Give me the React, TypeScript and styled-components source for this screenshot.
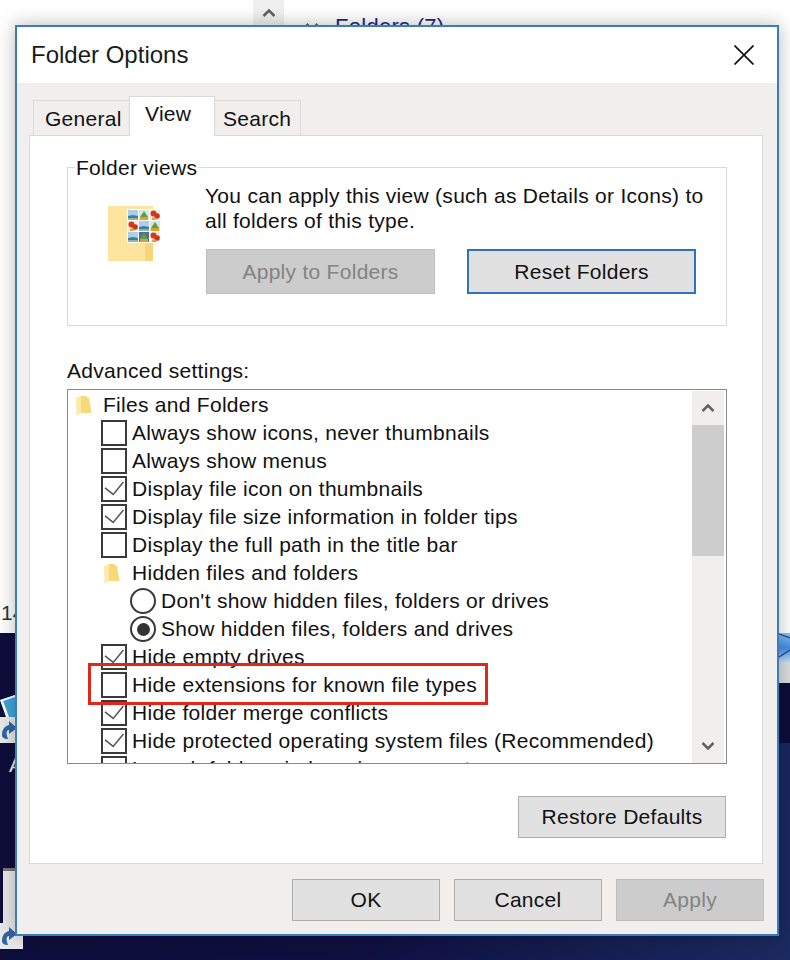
import React from 'react'
import styled, { createGlobalStyle } from 'styled-components'

const GlobalStyle = createGlobalStyle`
    html, body {
        margin: 0;
        padding: 0;
        background: #0e0d3a;
    }
    * {
        box-sizing: border-box;
    }
`

const Desktop = styled.div`
    position: relative;
    width: 790px;
    height: 960px;
    overflow: hidden;
    font-family: "Liberation Sans", Arial, sans-serif;
    font-size: 21px;
    letter-spacing: 0.28px;
    color: #111;
    background: linear-gradient(100deg, #0e0d3a 0%, #0f1040 55%, #1b2a60 100%);
`

// ** the explorer window that sits behind the dialog
const BackWindow = styled.div`
    position: relative;
    height: 633px;
    background: #fff;
`

const ScrollStub = styled.div`
    position: absolute;
    left: 253px;
    top: 0;
    width: 31px;
    height: 25px;
    display: flex;
    align-items: center;
    justify-content: center;
    background: #f0f0f0;
`

const GroupHeading = styled.div`
    position: absolute;
    left: 305px;
    top: 15px;
    display: flex;
    align-items: center;
    gap: 16px;
    font-size: 22px;
    line-height: 24px;
    color: #1c2a86;
`

const RowNumber = styled.div`
    position: absolute;
    left: 1px;
    top: 601px;
    letter-spacing: 0;
    color: #333;
`

const DesktopPiece = styled.div<{ $x: number; $y: number }>`
    position: absolute;
    left: ${p => p.$x}px;
    top: ${p => p.$y}px;
`

const IconLabel = styled(DesktopPiece)`
    color: #eee;
    line-height: 20px;
`

const StripBlock = styled.div<{ $x: number; $y: number; $w: number; $h: number; $bg: string }>`
    position: absolute;
    left: ${p => p.$x}px;
    top: ${p => p.$y}px;
    width: ${p => p.$w}px;
    height: ${p => p.$h}px;
    background: ${p => p.$bg};
`

const Window = styled.div`
    position: absolute;
    left: 15px;
    top: 25px;
    width: 764px;
    height: 911px;
    display: flex;
    flex-direction: column;
    border: 2px solid #3b7cbd;
    background: #f0efee;
    box-shadow: 0 0 18px rgba(0, 0, 0, 0.28);
`

const TitleBar = styled.div`
    height: 56px;
    flex: none;
    display: flex;
    align-items: center;
    justify-content: space-between;
    padding: 0 23px 0 14px;
    background: #fff;
`

const Title = styled.div`
    font-size: 24px;
    letter-spacing: 0;
    color: #1a1a1a;
`

const Body = styled.div`
    flex: 1;
    display: flex;
    flex-direction: column;
    padding: 13px 14px 15px 12px;
`

const TabStrip = styled.div`
    display: flex;
    align-items: flex-end;
    height: 40px;
    padding-left: 4px;
    margin-bottom: -1px;
    position: relative;
    z-index: 1;
`

const Tab = styled.div<{ $active?: boolean; $width: number; $inset: number }>`
    width: ${p => p.$width}px;
    height: ${p => (p.$active ? 40 : 36)}px;
    margin-right: -1px;
    display: flex;
    padding-left: ${p => p.$inset}px;
    padding-top: ${p => (p.$active ? 5 : 6)}px;
    line-height: 24px;
    position: relative;
    z-index: ${p => (p.$active ? 1 : 0)};
    border: 1px solid #d9d9d9;
    border-bottom: ${p => (p.$active ? 'none' : '1px solid #d9d9d9')};
    background: ${p => (p.$active ? '#fff' : '#f0efee')};
`

const Panel = styled.div`
    height: 729px;
    flex: none;
    display: flex;
    flex-direction: column;
    padding: 21px 35px 0 37px;
    background: #fff;
    border: 1px solid #d9d9d9;
`

const FolderViews = styled.fieldset`
    margin: 0;
    height: 169px;
    padding: 0;
    display: flex;
    border: 1px solid #d9d9d9;
    min-width: 0;
`

const Legend = styled.legend`
    margin-left: 7px;
    padding: 1px 1px 0;
    line-height: 20px;
`

const ViewsIcon = styled.div`
    width: 137px;
    flex: none;
    padding: 28px 0 0 40px;
`

const ViewsContent = styled.div`
    flex: 1;
    padding-top: 5px;
`

const ViewsText = styled.div`
    line-height: 25px;
    margin-bottom: 16px;
    white-space: nowrap;
`

const ViewsButtons = styled.div`
    display: flex;
    gap: 32px;
    padding-left: 1px;
`

const Button = styled.div<{ $width: number; $height?: number; $disabled?: boolean; $focused?: boolean }>`
    width: ${p => p.$width}px;
    height: ${p => p.$height ?? 42}px;
    flex: none;
    display: flex;
    align-items: center;
    justify-content: center;
    color: ${p => (p.$disabled ? '#838383' : '#111')};
    background: ${p => (p.$disabled ? '#cccccc' : '#e1e1e1')};
    border: ${p =>
        p.$focused ? '2px solid #2f74b9' : p.$disabled ? '1px solid #bfbfbf' : '1px solid #adadad'};
`

const AdvancedLabel = styled.div`
    margin-top: 33px;
    line-height: 24px;
`

const SettingsList = styled.div`
    position: relative;
    margin-top: 6px;
    height: 375px;
    flex: none;
    display: flex;
    border: 1px solid #8a8a8a;
    padding: 1px 2px 0 0;
`

const Rows = styled.div`
    flex: 1;
    min-width: 0;
    overflow: hidden;
`

const Row = styled.div<{ $level: number }>`
    height: 28px;
    display: flex;
    align-items: center;
    padding-left: ${p => 4 + p.$level * 29}px;
    white-space: nowrap;
`

const Mark = styled.div`
    width: 31px;
    flex: none;
    display: flex;
    align-items: center;
`

const FolderSlot = styled.div<{ $level: number }>`
    display: flex;
    margin-left: ${p => (p.$level ? 3 : 4)}px;
`

const CheckBox = styled.div`
    width: 26px;
    height: 26px;
    border: 2px solid #3a3a3a;
    background: #fff;
`

const Radio = styled.div`
    width: 26px;
    height: 26px;
    display: flex;
    align-items: center;
    justify-content: center;
    border: 2px solid #3a3a3a;
    border-radius: 50%;
    background: #fff;
`

const RadioDot = styled.div`
    width: 13px;
    height: 13px;
    border-radius: 50%;
    background: #333;
`

const Scrollbar = styled.div`
    width: 32px;
    flex: none;
    display: flex;
    flex-direction: column;
    background: #f0efee;
`

const ScrollArrow = styled.div`
    height: 34px;
    flex: none;
    display: flex;
    align-items: center;
    justify-content: center;
`

const Thumb = styled.div`
    height: 131px;
    flex: none;
    background: #cdcdcd;
`

const ScrollSpace = styled.div`
    flex: 1;
`

const Annotation = styled.div`
    position: absolute;
    left: 20px;
    top: 273px;
    width: 400px;
    height: 42px;
    border: 3px solid #e0281a;
    pointer-events: none;
`

const RestoreRow = styled.div`
    margin-top: 32px;
    display: flex;
    justify-content: flex-end;
    margin-right: 1px;
`

const Footer = styled.div`
    margin-top: 15px;
    display: flex;
    justify-content: flex-end;
    gap: 14px;
    margin-right: -1px;
`

const Chevron = ({ down }: { down?: boolean }) => (
    <svg width="14" height="10" viewBox="0 0 14 10">
        <path
            d={down ? 'M1.5 2l5.5 5.5L12.5 2' : 'M1.5 8L7 2.5 12.5 8'}
            fill="none"
            stroke="#606060"
            strokeWidth="2.5"
        />
    </svg>
)

const CloseIcon = () => (
    <svg width="20" height="20" viewBox="0 0 20 20">
        <path d="M0.5 0.5l19 19M19.5 0.5l-19 19" stroke="#111" strokeWidth="1.7" fill="none" />
    </svg>
)

const Check = () => (
    <svg width="22" height="22" viewBox="0 0 22 22" style={{ display: 'block' }}>
        <path d="M2 9.8l8.2 6.6L20.4 4" fill="none" stroke="#555" strokeWidth="1.5" />
    </svg>
)

const TreeFolder = () => (
    <svg width="16" height="21" viewBox="0 0 16 21">
        <path d="M0 3L5 0.5V18L0.6 21z" fill="#fde9a8" />
        <path d="M5 1h5l1.5 1.5h1.5L15.5 18H5z" fill="#f9d878" />
    </svg>
)

// ** the three little pictures on the folder icon
const Landscape = ({ x, y }: { x: number; y: number }) => (
    <g transform={`translate(${x} ${y})`}>
        <rect width="10" height="10" fill="#a8d0ee" />
        <path d="M0 6l5-1 5 1v4H0z" fill="#3f7f95" />
        <rect y="8" width="10" height="2" fill="#8fb7a0" />
    </g>
)

const Tree = ({ x, y, dark }: { x: number; y: number; dark?: boolean }) => (
    <g transform={`translate(${x} ${y})`}>
        <rect width="10" height="10" fill={dark ? '#4c6f9c' : '#d7e6ee'} />
        <path d="M5 1l4 6H1z" fill="#5fa03c" />
        <rect x="1" y="7" width="8" height="3" fill="#e0a024" />
    </g>
)

const Flower = ({ x, y }: { x: number; y: number }) => (
    <g transform={`translate(${x} ${y})`}>
        <rect width="10" height="10" fill="#f3ead8" />
        <circle cx="3.5" cy="3.5" r="3" fill="#d63a1c" />
        <circle cx="7" cy="6" r="2.8" fill="#c9361a" />
        <rect x="2" y="7.5" width="4" height="2.5" fill="#e2a52c" />
    </g>
)

const ViewsFolder = () => (
    <svg width="53" height="56" viewBox="0 0 53 56" style={{ display: 'block' }}>
        <rect x="0" y="0" width="45" height="55" fill="#fde49f" />
        <path d="M37 37h8v18h-8z" fill="#f8d577" />
        <rect x="19" y="3" width="34" height="34" fill="#fff" />
        <Landscape x={20} y={4} />
        <Tree x={31} y={4} />
        <Flower x={42} y={4} />
        <Flower x={20} y={15} />
        <Landscape x={31} y={15} />
        <Tree x={42} y={15} />
        <Landscape x={20} y={26} />
        <Tree x={31} y={26} dark />
        <Flower x={42} y={26} />
    </svg>
)

const ShortcutArrow = () => (
    <svg width="22" height="26" viewBox="0 0 22 26" style={{ display: 'block' }}>
        <path d="M2 18c0-6 3-9 7-10V4l8 7-8 6v-4c-2 0-3 2-2 6l1 3c-3 0-6-1-6-4z" fill="#2f66a8" />
    </svg>
)

const CornerIcon = () => (
    <svg width="12" height="30" viewBox="0 0 12 30" style={{ display: 'block' }}>
        <defs>
            <linearGradient id="cornerBlue" x1="0" y1="0" x2="0" y2="1">
                <stop offset="0" stopColor="#8fc0ee" />
                <stop offset="0.5" stopColor="#3f8fe8" />
                <stop offset="1" stopColor="#cfe2f4" />
            </linearGradient>
        </defs>
        <rect width="12" height="30" fill="url(#cornerBlue)" />
        <path d="M1 1l11 4M1 24l11-7" fill="none" stroke="#1c3f8c" strokeWidth="1.2" />
    </svg>
)

type Setting = {
    label: string
    level: number
    kind: 'folder' | 'check' | 'radio'
    on?: boolean
}

const settings: Setting[] = [
    { label: 'Files and Folders', level: 0, kind: 'folder' },
    { label: 'Always show icons, never thumbnails', level: 1, kind: 'check' },
    { label: 'Always show menus', level: 1, kind: 'check' },
    { label: 'Display file icon on thumbnails', level: 1, kind: 'check', on: true },
    { label: 'Display file size information in folder tips', level: 1, kind: 'check', on: true },
    { label: 'Display the full path in the title bar', level: 1, kind: 'check' },
    { label: 'Hidden files and folders', level: 1, kind: 'folder' },
    { label: "Don't show hidden files, folders or drives", level: 2, kind: 'radio' },
    { label: 'Show hidden files, folders and drives', level: 2, kind: 'radio', on: true },
    { label: 'Hide empty drives', level: 1, kind: 'check', on: true },
    { label: 'Hide extensions for known file types', level: 1, kind: 'check' },
    { label: 'Hide folder merge conflicts', level: 1, kind: 'check', on: true },
    { label: 'Hide protected operating system files (Recommended)', level: 1, kind: 'check', on: true },
    { label: 'Launch folder windows in a separate process', level: 1, kind: 'check' },
]

const App = () => {
    return (
        <Desktop>
            <GlobalStyle />

            <BackWindow>
                <ScrollStub>
                    <Chevron />
                </ScrollStub>
                <GroupHeading>
                    <Chevron down />
                    <span>Folders (7)</span>
                </GroupHeading>
                <RowNumber>14</RowNumber>
            </BackWindow>

            <DesktopPiece $x={0} $y={695}>
                <svg width="15" height="24" viewBox="0 0 15 24" style={{ display: 'block' }}>
                    <path d="M0 5L15 0v22H8z" fill="#3fa4dc" />
                    <path d="M0 5l15-5v2L3 6l6 16H6z" fill="#fff" />
                </svg>
            </DesktopPiece>
            <StripBlock $x={0} $y={717} $w={15} $h={26} $bg="#e9e9e9" />
            <DesktopPiece $x={0} $y={717}>
                <ShortcutArrow />
            </DesktopPiece>
            <IconLabel $x={9} $y={755}>A</IconLabel>

            <StripBlock $x={3} $y={868} $w={12} $h={56} $bg="#e8e8e8" />
            <StripBlock $x={3} $y={868} $w={12} $h={3} $bg="#777" />
            <StripBlock $x={0} $y={923} $w={23} $h={26} $bg="#e9e9e9" />
            <DesktopPiece $x={0} $y={923}>
                <ShortcutArrow />
            </DesktopPiece>

            <DesktopPiece $x={778} $y={633}>
                <CornerIcon />
            </DesktopPiece>
            <StripBlock $x={778} $y={663} $w={12} $h={20} $bg="#dcdcdc" />
            <StripBlock $x={778} $y={683} $w={12} $h={60} $bg="#0e0d3a" />

            <Window>
                <TitleBar>
                    <Title>Folder Options</Title>
                    <CloseIcon />
                </TitleBar>
                <Body>
                    <TabStrip>
                        <Tab $width={97} $inset={11}>General</Tab>
                        <Tab $width={86} $inset={15} $active>View</Tab>
                        <Tab $width={87} $inset={8}>Search</Tab>
                    </TabStrip>
                    <Panel>
                        <FolderViews>
                            <Legend>Folder views</Legend>
                            <ViewsIcon>
                                <ViewsFolder />
                            </ViewsIcon>
                            <ViewsContent>
                                <ViewsText>
                                    You can apply this view (such as Details or Icons) to
                                    <br />
                                    all folders of this type.
                                </ViewsText>
                                <ViewsButtons>
                                    <Button $width={229} $height={45} $disabled>Apply to Folders</Button>
                                    <Button $width={229} $height={45} $focused>Reset Folders</Button>
                                </ViewsButtons>
                            </ViewsContent>
                        </FolderViews>

                        <AdvancedLabel>Advanced settings:</AdvancedLabel>
                        <SettingsList>
                            <Rows>
                                {settings.map(item => (
                                    <Row key={item.label} $level={item.level}>
                                        <Mark>
                                            {item.kind === 'folder' && (
                                                <FolderSlot $level={item.level}>
                                                    <TreeFolder />
                                                </FolderSlot>
                                            )}
                                            {item.kind === 'check' && (
                                                <CheckBox>{item.on && <Check />}</CheckBox>
                                            )}
                                            {item.kind === 'radio' && (
                                                <Radio>{item.on && <RadioDot />}</Radio>
                                            )}
                                        </Mark>
                                        {item.label}
                                    </Row>
                                ))}
                            </Rows>
                            <Scrollbar>
                                <ScrollArrow>
                                    <Chevron />
                                </ScrollArrow>
                                <Thumb />
                                <ScrollSpace />
                                <ScrollArrow>
                                    <Chevron down />
                                </ScrollArrow>
                            </Scrollbar>
                            <Annotation />
                        </SettingsList>

                        <RestoreRow>
                            <Button $width={208}>Restore Defaults</Button>
                        </RestoreRow>
                    </Panel>
                    <Footer>
                        <Button $width={148}>OK</Button>
                        <Button $width={148}>Cancel</Button>
                        <Button $width={148} $disabled>Apply</Button>
                    </Footer>
                </Body>
            </Window>
        </Desktop>
    )
}

export default App
